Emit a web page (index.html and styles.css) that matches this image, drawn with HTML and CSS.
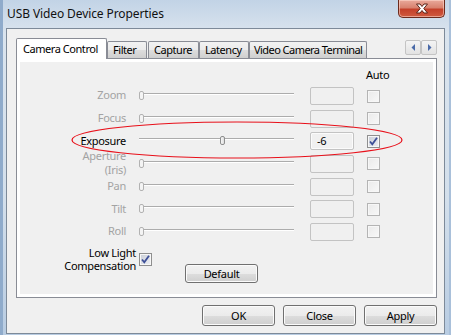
FILE: index.html
```html
<!DOCTYPE html>
<html lang="en">
<head>
    <meta charset="UTF-8">
    <title>USB Video Device Properties</title>
    <link rel="stylesheet" href="styles.css">
</head>
<body>
    <div class="window">
        <div class="titlebar">
            <span class="title">USB Video Device Properties</span>
            <div class="close-btn">
                <svg width="14" height="11" viewBox="0 0 14 11">
                    <path d="M1.5 1 H5 L7 3.5 L9 1 H12.5 L8.8 5.5 L12.5 10 H9 L7 7.5 L5 10 H1.5 L5.2 5.5 Z" fill="#fff" stroke="#5a2419" stroke-width="1" stroke-linejoin="round"/>
                </svg>
            </div>
        </div>
        <div class="client">
            <div class="tabs">
                <div class="tab tab-active w-camera">Camera Control</div>
                <div class="tab w-filter">Filter</div>
                <div class="tab w-capture">Capture</div>
                <div class="tab w-latency">Latency</div>
                <div class="tab w-terminal">Video Camera Terminal</div>
                <div class="tab-scroll">
                    <span class="scroll-btn"><svg width="5" height="7" viewBox="0 0 5 7"><path d="M4 0 V7 L0.5 3.5 Z" fill="#4a6aa8"/></svg></span>
                    <span class="scroll-btn"><svg width="5" height="7" viewBox="0 0 5 7"><path d="M1 0 V7 L4.5 3.5 Z" fill="#4a6aa8"/></svg></span>
                </div>
            </div>
            <div class="panel">
                <div class="page">
                    <div class="auto-head">Auto</div>

                    <div class="prop disabled">
                        <span class="prop-label">Zoom</span>
                        <div class="slider"><span class="track"></span><span class="thumb"></span></div>
                        <div class="edit"></div>
                        <span class="check"></span>
                    </div>
                    <div class="prop disabled">
                        <span class="prop-label">Focus</span>
                        <div class="slider"><span class="track"></span><span class="thumb"></span></div>
                        <div class="edit"></div>
                        <span class="check"></span>
                    </div>
                    <div class="prop">
                        <span class="prop-label">Exposure</span>
                        <div class="slider"><span class="track"></span><span class="thumb" style="left: 81px"></span></div>
                        <div class="edit edit-value">-6</div>
                        <span class="check checked">
                            <svg width="11" height="11" viewBox="0 0 11 11"><path d="M2 5.5 L4.3 8.3 L9 1.8" fill="none" stroke="#3d4f97" stroke-width="1.8"/></svg>
                        </span>
                    </div>
                    <div class="prop disabled">
                        <span class="prop-label">Aperture<br>(Iris)</span>
                        <div class="slider"><span class="track"></span><span class="thumb"></span></div>
                        <div class="edit"></div>
                        <span class="check"></span>
                    </div>
                    <div class="prop disabled">
                        <span class="prop-label">Pan</span>
                        <div class="slider"><span class="track"></span><span class="thumb"></span></div>
                        <div class="edit"></div>
                        <span class="check"></span>
                    </div>
                    <div class="prop disabled">
                        <span class="prop-label">Tilt</span>
                        <div class="slider"><span class="track"></span><span class="thumb"></span></div>
                        <div class="edit"></div>
                        <span class="check"></span>
                    </div>
                    <div class="prop disabled">
                        <span class="prop-label">Roll</span>
                        <div class="slider"><span class="track"></span><span class="thumb"></span></div>
                        <div class="edit"></div>
                        <span class="check"></span>
                    </div>

                    <div class="low-light">
                        <div class="low-light-group">
                            <span class="low-light-label">Low Light<br>Compensation</span>
                            <span class="check checked">
                                <svg width="11" height="11" viewBox="0 0 11 11"><path d="M2 5.5 L4.3 8.3 L9 1.8" fill="none" stroke="#3d4f97" stroke-width="1.8"/></svg>
                            </span>
                        </div>
                        <button class="btn btn-default">Default</button>
                    </div>
                </div>
            </div>
            <div class="buttons">
                <button class="btn btn-dialog">OK</button>
                <button class="btn btn-dialog">Close</button>
                <button class="btn btn-dialog">Apply</button>
            </div>
        </div>
        <svg class="mark" width="340" height="44" viewBox="0 0 340 44">
            <ellipse cx="168" cy="21" rx="165" ry="18" fill="none" stroke="#e8101a" stroke-width="1.2"/>
        </svg>
    </div>
</body>
</html>
```

FILE: styles.css
```css
body {
    margin: 0;
    background-color: #c9d8e8;
    font-family: "Noto Sans", "Open Sans", sans-serif;
    font-size: 11px;
    letter-spacing: -0.3px;
    color: #000;
}
.window {
    position: relative;
    width: 451px;
    height: 335px;
    padding: 0 6px 1px 6px;
    box-sizing: border-box;
    display: flex;
    flex-direction: column;
    background: linear-gradient(to bottom, #c2d3e6 0%, #dae4ee 10%, #d3dfeb 60%, #b8cce2 100%);
    box-shadow: inset 3px 0 0 #8fabcb, inset -2px 0 0 #a9c0da;
}
.titlebar {
    height: 28px;
    display: flex;
    justify-content: space-between;
    align-items: flex-start;
}
.title {
    margin-top: 5px;
    margin-left: 1px;
    font-size: 12px;
    letter-spacing: -0.1px;
    color: #111;
}
.close-btn {
    width: 47px;
    height: 18px;
    box-sizing: border-box;
    display: flex;
    align-items: center;
    justify-content: center;
    border: 1px solid #6c2a1d;
    border-top: none;
    border-radius: 0 0 5px 5px;
    background: linear-gradient(to bottom, #e9a99b 0%, #d8826f 45%, #c4402a 55%, #cf5a3f 100%);
    box-shadow: inset 0 0 0 1px rgba(255, 220, 210, 0.55);
}
.client {
    flex: 1;
    display: flex;
    flex-direction: column;
    padding: 9px 7px 0 9px;
    border: 1px solid #7d8a99;
    background-color: #f0f0f0;
}

/* tabs */
.tabs {
    height: 20px;
    display: flex;
    align-items: flex-end;
    position: relative;
    z-index: 1;
}
.tab {
    height: 17px;
    box-sizing: border-box;
    padding-left: 5px;
    border: 1px solid #898c95;
    border-bottom: none;
    border-radius: 2px 2px 0 0;
    background: linear-gradient(to bottom, #f2f2f2 0%, #ebebeb 50%, #dddddd 51%, #cfcfcf 100%);
    line-height: 15px;
    letter-spacing: -0.45px;
    white-space: nowrap;
    overflow: hidden;
}
.tab-active {
    height: 21px;
    margin-bottom: -1px;
    padding-left: 6px;
    background: #fff;
    line-height: 19px;
}
.w-camera { width: 91px; }
.w-filter { width: 40px; }
.w-capture { width: 51px; margin-left: 1px; }
.w-latency { width: 50px; }
.w-terminal { width: 118px; padding-left: 4px; letter-spacing: -0.55px; }
.tab-scroll {
    margin-left: auto;
    align-self: flex-start;
    margin-top: 2px;
    display: flex;
}
.scroll-btn {
    width: 16px;
    height: 15px;
    box-sizing: border-box;
    display: flex;
    align-items: center;
    justify-content: center;
    border: 1px solid #c4c4c4;
    border-radius: 2px;
    background: linear-gradient(to bottom, #f4f4f4, #e2e2e2);
}

/* panel */
.panel {
    width: 421px;
    height: 240px;
    box-sizing: border-box;
    border: 1px solid #898c95;
    padding: 3px;
    background-color: #fff;
}
.page {
    height: 100%;
    background-color: #f0f0f0;
    display: flex;
    flex-direction: column;
}
.auto-head {
    height: 25px;
    line-height: 25px;
    padding-left: 346px;
}
.prop {
    height: 18px;
    margin-bottom: 4.67px;
    display: flex;
    align-items: center;
}
.prop-label {
    width: 106px;
    margin-right: 13px;
    margin-top: -2px;
    text-align: right;
    line-height: 13.5px;
    white-space: nowrap;
}
.disabled .prop-label {
    color: #a3a3a3;
}
.slider {
    position: relative;
    width: 155px;
    height: 18px;
    margin-right: 16px;
}
.track {
    position: absolute;
    top: 6px;
    left: 0;
    right: 0;
    height: 1px;
    background-color: #acacac;
    border-bottom: 1px solid #fff;
}
.thumb {
    position: absolute;
    top: 4px;
    left: 0;
    width: 5px;
    height: 9px;
    box-sizing: border-box;
    border: 1px solid #8e8f8f;
    border-radius: 2px;
    background: linear-gradient(to right, #f7f7f7, #dedede);
}
.disabled .thumb {
    border-color: #b2b2b2;
    background: #f4f4f4;
}
.edit {
    width: 44px;
    height: 18px;
    box-sizing: border-box;
    margin-right: 13px;
    border: 1px solid #c3c3c3;
    border-radius: 2px;
    background-color: #f0f0f0;
}
.edit-value {
    padding-left: 6px;
    line-height: 16px;
    box-shadow: inset 0 0 0 1px #fbfbfb;
}
.check {
    width: 13px;
    height: 13px;
    box-sizing: border-box;
    display: flex;
    align-items: center;
    justify-content: center;
    border: 1px solid #b4b4b4;
    background: linear-gradient(135deg, #eaeaea, #f8f8f8);
    box-shadow: inset 0 0 0 1px #f7f7f7;
}
.check.checked {
    border-color: #8f8f8f;
    background: linear-gradient(135deg, #c9cdd6, #eef0f4);
}

/* low light */
.low-light {
    display: flex;
    align-items: flex-start;
}
.low-light-group {
    display: flex;
    align-items: center;
}
.low-light-label {
    width: 116px;
    margin-right: 3px;
    text-align: right;
    line-height: 13.5px;
}

/* buttons */
.btn {
    box-sizing: border-box;
    padding: 0;
    border: 1px solid #707070;
    border-radius: 3px;
    background: linear-gradient(to bottom, #f2f2f2 0%, #ebebeb 50%, #dddddd 51%, #cfcfcf 100%);
    box-shadow: inset 0 0 0 1px #fbfbfb;
    font-family: inherit;
    font-size: 11px;
    letter-spacing: -0.3px;
    color: #000;
}
.btn-default {
    width: 73px;
    height: 19px;
    margin-left: 33px;
    margin-top: 18px;
}
.buttons {
    margin-top: 7px;
    display: flex;
    justify-content: flex-end;
    gap: 8px;
}
.btn-dialog {
    width: 73px;
    height: 21px;
}

/* red annotation */
.mark {
    position: absolute;
    left: 69px;
    top: 119px;
}
```
